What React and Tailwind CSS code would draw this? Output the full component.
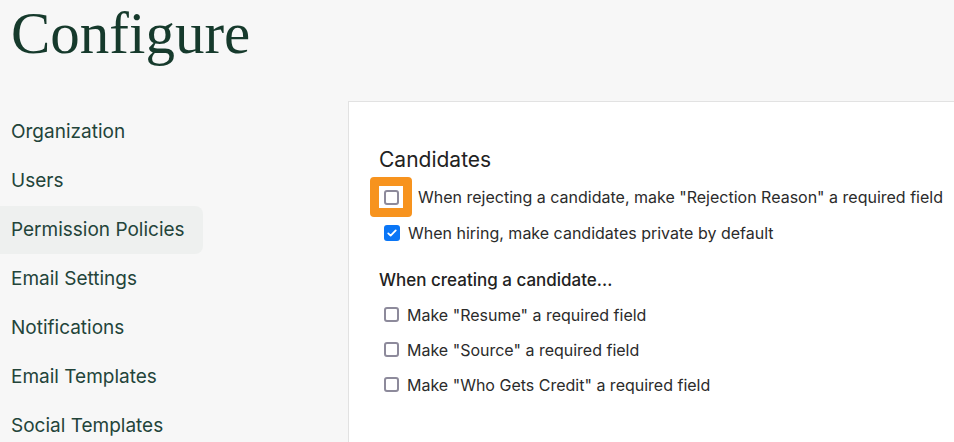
import React from 'react';

const navItems = [
    'Organization',
    'Users',
    'Permission Policies',
    'Email Settings',
    'Notifications',
    'Email Templates',
    'Social Templates',
];

function Box({ checked }) {
    if (checked) {
        return (
            <span className="flex h-4 w-4 shrink-0 items-center justify-center rounded-[3px] bg-[#0a76f6]">
                <svg viewBox="0 0 16 16" className="h-3 w-3" fill="none" stroke="white" strokeWidth="2.4" strokeLinecap="round" strokeLinejoin="round">
                    <path d="M3 8.5l3.2 3L13 4.5" />
                </svg>
            </span>
        );
    }
    return <span className="block h-[15px] w-[15px] shrink-0 rounded-[3px] border-2 border-[#8d8a9b] bg-white" />;
}

function Option({ checked, children }) {
    return (
        <div className="flex h-[35px] items-center gap-2 pl-[5px] text-[16px] text-[#2b2b2b]">
            <Box checked={checked} />
            <span>{children}</span>
        </div>
    );
}

export default function App() {
    return (
        <div
            className="h-[442px] w-[954px] overflow-hidden bg-[#f7f7f7]"
            style={{ fontFamily: 'Inter, "Liberation Sans", sans-serif' }}
        >
            <div className="h-[101px] pl-[11px]">
                <h1
                    className="text-[59px] leading-[66px] text-[#163a2c]"
                    style={{ fontFamily: '"Liberation Serif", serif' }}
                >
                    Configure
                </h1>
            </div>

            <div className="flex">
                <nav className="flex w-[348px] shrink-0 flex-col gap-px pt-[7px]">
                    {navItems.map((item) => (
                        <div
                            key={item}
                            className={
                                item === 'Permission Policies'
                                    ? 'flex h-[48px] w-[203px] items-center rounded-r-lg bg-[#eef0ef] pl-[11px] text-[19px] text-[#23443a]'
                                    : 'flex h-[48px] items-center pl-[11px] text-[19px] text-[#23443a]'
                            }
                        >
                            {item}
                        </div>
                    ))}
                </nav>

                <div className="h-[400px] flex-1 border-l border-t border-[#e2e2e2] bg-white pl-[30px] pt-[44px]">
                    <h2 className="text-[21px] leading-[28px] text-[#222]">Candidates</h2>

                    <div className="mt-[3px] flex h-[40px] items-center gap-[6px] text-[16px] text-[#2b2b2b]">
                        <span className="ml-[-9px] flex h-[40px] w-[42px] items-center justify-center rounded-[4px] border-[9px] border-[#f7931e] bg-white">
                            <Box checked={false} />
                        </span>
                        <span>When rejecting a candidate, make "Rejection Reason" a required field</span>
                    </div>
                    <div className="flex h-[32px] items-center gap-2 pl-[5px] text-[16px] text-[#2b2b2b]">
                        <Box checked />
                        <span>When hiring, make candidates private by default</span>
                    </div>

                    <div className="mt-[17px] text-[17px] font-medium leading-[28px] text-[#222]">
                        When creating a candidate...
                    </div>
                    <div className="mt-[3px]">
                        <Option>Make "Resume" a required field</Option>
                        <Option>Make "Source" a required field</Option>
                        <Option>Make "Who Gets Credit" a required field</Option>
                    </div>
                </div>
            </div>
        </div>
    );
}
